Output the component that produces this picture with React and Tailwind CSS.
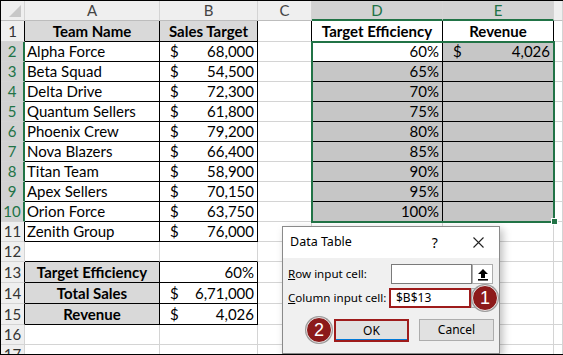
import React from "react";

const W = ["w-[24px]", "w-[135px]", "w-[98px]", "w-[54px]", "w-[131px]", "w-[111px]", "flex-1"];

function Cell({ i, r = "g", b = "g", bg = "bg-white", cls = "", children }) {
  const rc = r === "k" ? "border-r-black" : r === "n" ? "border-r-transparent" : "border-r-[#d4d4d4]";
  const bc = b === "k" ? "border-b-black" : "border-b-[#d4d4d4]";
  return (
    <div className={`${W[i]} shrink-0 h-full border-r border-b ${rc} ${bc} ${bg} flex items-center overflow-hidden whitespace-nowrap ${cls}`}>
      {children}
    </div>
  );
}

function RowHead({ n, hl, r = "g" }) {
  const rc = hl ? "border-r-2 border-r-[#217346]" : r === "k" ? "border-r border-r-black" : "border-r border-r-[#d4d4d4]";
  return (
    <div className={`w-[24px] shrink-0 h-full border-b border-b-[#d4d4d4] ${rc} ${hl ? "bg-[#d2d2d2] text-[#217346]" : "bg-[#efefef] text-[#333]"} flex items-center justify-center`}>
      {n}
    </div>
  );
}

function Money({ v }) {
  return (
    <div className="flex w-full justify-between pl-[10px] pr-[3px]">
      <span>$</span>
      <span>{v}</span>
    </div>
  );
}

const teams = [
  ["Alpha Force", "68,000", "60%"],
  ["Beta Squad", "54,500", "65%"],
  ["Delta Drive", "72,300", "70%"],
  ["Quantum Sellers", "61,800", "75%"],
  ["Phoenix Crew", "79,200", "80%"],
  ["Nova Blazers", "66,400", "85%"],
  ["Titan Team", "58,900", "90%"],
  ["Apex Sellers", "70,150", "95%"],
  ["Orion Force", "63,750", "100%"],
];

export default function App() {
  return (
    <div className="relative w-[563px] h-[355px] overflow-hidden bg-white border-t border-l border-b border-black font-['Lato'] text-[15px] text-black leading-none">
      {/* column headers */}
      <div className="flex h-[20px]">
        <div className="w-[24px] shrink-0 h-full bg-[#efefef] border-r border-b border-r-[#d4d4d4] border-b-[#bdbdbd] flex items-end justify-end pr-[3px] pb-[3px]">
          <svg width="13" height="12" viewBox="0 0 13 12"><polygon points="13,0 13,12 1,12" fill="#c8c8c8" /></svg>
        </div>
        {["A", "B", "C", "D", "E", ""].map((l, k) => {
          const sel = l === "D" || l === "E";
          return (
            <div
              key={k}
              className={`${W[k + 1]} shrink-0 h-full border-r border-r-[#d4d4d4] ${sel ? "bg-[#d2d2d2] text-[#217346] border-b-2 border-b-[#217346]" : "bg-[#efefef] text-[#444] border-b border-b-[#bdbdbd]"} flex items-center justify-center`}
            >
              {l}
            </div>
          );
        })}
      </div>

      {/* row 1 */}
      <div className="flex h-[21px]">
        <RowHead n={1} r="k" />
        <Cell i={1} r="k" b="k" bg="bg-[#d9d9d9]" cls="justify-center font-bold">Team Name</Cell>
        <Cell i={2} r="k" b="k" bg="bg-[#d9d9d9]" cls="justify-center font-bold">Sales Target</Cell>
        <Cell i={3} r="k" />
        <Cell i={4} r="k" b="k" cls="justify-center font-bold">Target Efficiency</Cell>
        <Cell i={5} r="k" b="k" cls="justify-center font-bold">Revenue</Cell>
        <Cell i={6} />
      </div>

      {/* rows 2-10 */}
      {teams.map((t, k) => (
        <div key={k} className="flex h-[20px]">
          <RowHead n={k + 2} hl />
          <Cell i={1} r="k" b="k" cls="pl-[2px]">{t[0]}</Cell>
          <Cell i={2} r="k" b="k"><Money v={t[1]} /></Cell>
          <Cell i={3} r="k" />
          <Cell i={4} r="k" b="k" bg={k === 0 ? "bg-white" : "bg-[#c6c6c6]"} cls="justify-end pr-[3px]">{t[2]}</Cell>
          <Cell i={5} r="k" b="k" bg="bg-[#c6c6c6]">{k === 0 ? <Money v="4,026" /> : null}</Cell>
          <Cell i={6} />
        </div>
      ))}

      {/* row 11 */}
      <div className="flex h-[20px]">
        <RowHead n={11} r="k" />
        <Cell i={1} r="k" b="k" cls="pl-[2px]">Zenith Group</Cell>
        <Cell i={2} r="k" b="k"><Money v="76,000" /></Cell>
        <Cell i={3} />
        <Cell i={4} />
        <Cell i={5} />
        <Cell i={6} />
      </div>

      {/* row 12 */}
      <div className="flex h-[20px]">
        <RowHead n={12} />
        <Cell i={1} b="k" />
        <Cell i={2} b="k" />
        <Cell i={3} />
        <Cell i={4} />
        <Cell i={5} />
        <Cell i={6} />
      </div>

      {/* rows 13-15 */}
      <div className="flex h-[21px]">
        <RowHead n={13} r="k" />
        <Cell i={1} r="k" b="k" bg="bg-[#d9d9d9]" cls="justify-center font-bold">Target Efficiency</Cell>
        <Cell i={2} r="k" b="k" cls="justify-end pr-[3px]">60%</Cell>
        <Cell i={3} />
        <Cell i={4} />
        <Cell i={5} />
        <Cell i={6} />
      </div>
      <div className="flex h-[21px]">
        <RowHead n={14} r="k" />
        <Cell i={1} r="k" b="k" bg="bg-[#d9d9d9]" cls="justify-center font-bold">Total Sales</Cell>
        <Cell i={2} r="k" b="k"><Money v="6,71,000" /></Cell>
        <Cell i={3} />
        <Cell i={4} />
        <Cell i={5} />
        <Cell i={6} />
      </div>
      <div className="flex h-[21px]">
        <RowHead n={15} r="k" />
        <Cell i={1} r="k" b="k" bg="bg-[#d9d9d9]" cls="justify-center font-bold">Revenue</Cell>
        <Cell i={2} r="k" b="k"><Money v="4,026" /></Cell>
        <Cell i={3} />
        <Cell i={4} />
        <Cell i={5} />
        <Cell i={6} />
      </div>
      {[16, 17].map((n) => (
        <div key={n} className="flex h-[20px]">
          <RowHead n={n} />
          <Cell i={1} />
          <Cell i={2} />
          <Cell i={3} />
          <Cell i={4} />
          <Cell i={5} />
          <Cell i={6} />
        </div>
      ))}

      {/* selection overlay */}
      <div className="absolute left-[310px] top-[40px] w-[244px] h-[182px] border-2 border-[#217346] pointer-events-none" />
      <div className="absolute left-[550px] top-[217px] w-[7px] h-[7px] bg-[#217346] border border-white" />

      {/* dialog */}
      <div className="absolute left-[281px] top-[225px] w-[218px] h-[128px] border border-[#8a8a8a] bg-[#f0f0f0] shadow-[3px_3px_8px_rgba(0,0,0,0.25)] font-['Noto_Sans'] text-[12px] text-black whitespace-nowrap">
        <div className="h-[31px] bg-white flex items-center pl-[7px]">
          <span className="text-[12.5px]">Data Table</span>
          <span className="ml-[80px] text-[14px]">?</span>
          <svg className="ml-[35px]" width="11" height="11" viewBox="0 0 11 11">
            <path d="M0.5 0.5 L10.5 10.5 M10.5 0.5 L0.5 10.5" stroke="#222" strokeWidth="1.1" />
          </svg>
        </div>
        <div className="pt-[6px] pl-[5px] flex flex-col">
          <div className="flex items-center h-[20px]">
            <span className="w-[103px] shrink-0 text-[11.6px]"><span className="underline">R</span>ow input cell:</span>
            <div className="w-[81px] shrink-0 h-[20px] bg-white border border-[#7a7a7a]" />
            <div className="w-[21px] shrink-0 h-[20px] bg-white border border-[#adadad] flex items-center justify-center">
              <svg width="12" height="13" viewBox="0 0 12 13">
                <polygon points="6,1 11,6 8,6 8,10 4,10 4,6 1,6" fill="#000" />
                <rect x="1" y="11" width="10" height="1.6" fill="#000" />
              </svg>
            </div>
          </div>
          <div className="flex items-center h-[20px] mt-[4px]">
            <span className="w-[101px] shrink-0 text-[11.6px]"><span className="underline">C</span>olumn input cell:</span>
            <div className="w-[82px] shrink-0 h-[20px] bg-white border-2 border-[#9e1b1b] flex items-center pl-[5px]">$B$13</div>
            <div className="w-[22px] shrink-0 h-[20px] bg-[#e1e1e1] border border-[#adadad]" />
          </div>
          <div className="flex mt-[11px]">
            <div className="ml-[46px] w-[75px] h-[23px] border-2 border-[#9e1b1b] bg-[#e1e1e1] flex items-center justify-center shadow-[inset_0_-1px_0_#0078d7]">OK</div>
            <div className="ml-[10px] w-[75px] h-[22px] border border-[#adadad] bg-[#e1e1e1] flex items-center justify-center">Cancel</div>
          </div>
        </div>
        <div className="absolute left-[189px] top-[58px] w-[26px] h-[26px] rounded-full bg-[#8c1a1a] border border-[#e8e8e8] shadow-[0_0_0_1px_#9a9a9a] flex items-center justify-center text-white text-[18px] font-['Liberation_Sans']">1</div>
        <div className="absolute left-[23px] top-[90px] w-[26px] h-[26px] rounded-full bg-[#8c1a1a] border border-[#e8e8e8] shadow-[0_0_0_1px_#9a9a9a] flex items-center justify-center text-white text-[18px] font-['Liberation_Sans']">2</div>
      </div>
    </div>
  );
}
